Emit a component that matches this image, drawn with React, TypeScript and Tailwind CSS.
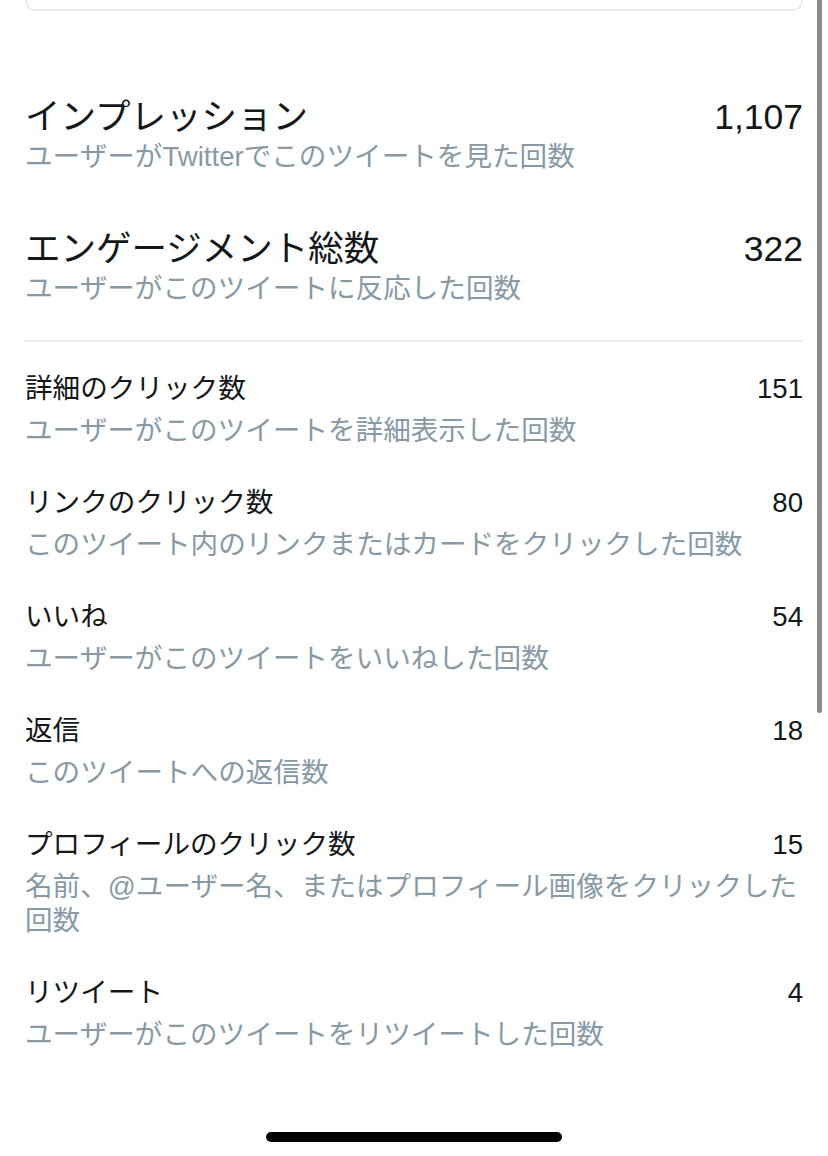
import React from 'react'

type Metric = {
    label: string
    desc: string
    value: string
}

const summary: Metric[] = [
    { label: 'インプレッション', desc: 'ユーザーがTwitterでこのツイートを見た回数', value: '1,107' },
    { label: 'エンゲージメント総数', desc: 'ユーザーがこのツイートに反応した回数', value: '322' },
]

const details: Metric[] = [
    { label: '詳細のクリック数', desc: 'ユーザーがこのツイートを詳細表示した回数', value: '151' },
    { label: 'リンクのクリック数', desc: 'このツイート内のリンクまたはカードをクリックした回数', value: '80' },
    { label: 'いいね', desc: 'ユーザーがこのツイートをいいねした回数', value: '54' },
    { label: '返信', desc: 'このツイートへの返信数', value: '18' },
    { label: 'プロフィールのクリック数', desc: '名前、@ユーザー名、またはプロフィール画像をクリックした回数', value: '15' },
    { label: 'リツイート', desc: 'ユーザーがこのツイートをリツイートした回数', value: '4' },
]

export default function App() {
    return (
        <main className="relative h-[1156px] w-[828px] overflow-hidden bg-white font-['Liberation_Sans','Noto_Sans_CJK_JP',sans-serif] text-[#14171a]">
            <div className="px-[25px]">
                {/* bottom of the card above, cut by the top edge */}
                <div className="h-[11px] rounded-b-[10px] border-2 border-t-0 border-[#e6ecf0]" />

                <div className="mt-[86px] flex flex-col gap-[55px]">
                    {summary.map((m) => (
                        <div key={m.label}>
                            <div className="flex items-center justify-between text-[35.5px] leading-[40px]">
                                <span>{m.label}</span>
                                <span>{m.value}</span>
                            </div>
                            <p className="mt-[3px] text-[27.6px] leading-[34px] text-[#8899a6]">{m.desc}</p>
                        </div>
                    ))}
                </div>

                <div className="mt-[34px] h-[2px] bg-[#e6ecf0]" />

                <div className="mt-[30px] flex flex-col gap-[38px]">
                    {details.map((m) => (
                        <div key={m.label}>
                            <div className="flex items-center justify-between text-[27.6px] leading-[34px]">
                                <span>{m.label}</span>
                                <span>{m.value}</span>
                            </div>
                            <p className="mt-[8px] text-[27.6px] leading-[34px] text-[#8899a6]">{m.desc}</p>
                        </div>
                    ))}
                </div>
            </div>

            {/* scroll indicator */}
            <div className="absolute right-[6px] top-0 h-[713px] w-[5px] rounded-b-full bg-[#8a8a8a]" />

            {/* home indicator */}
            <div className="absolute bottom-[14px] left-1/2 h-[10px] w-[296px] -translate-x-1/2 rounded-full bg-black" />
        </main>
    )
}
